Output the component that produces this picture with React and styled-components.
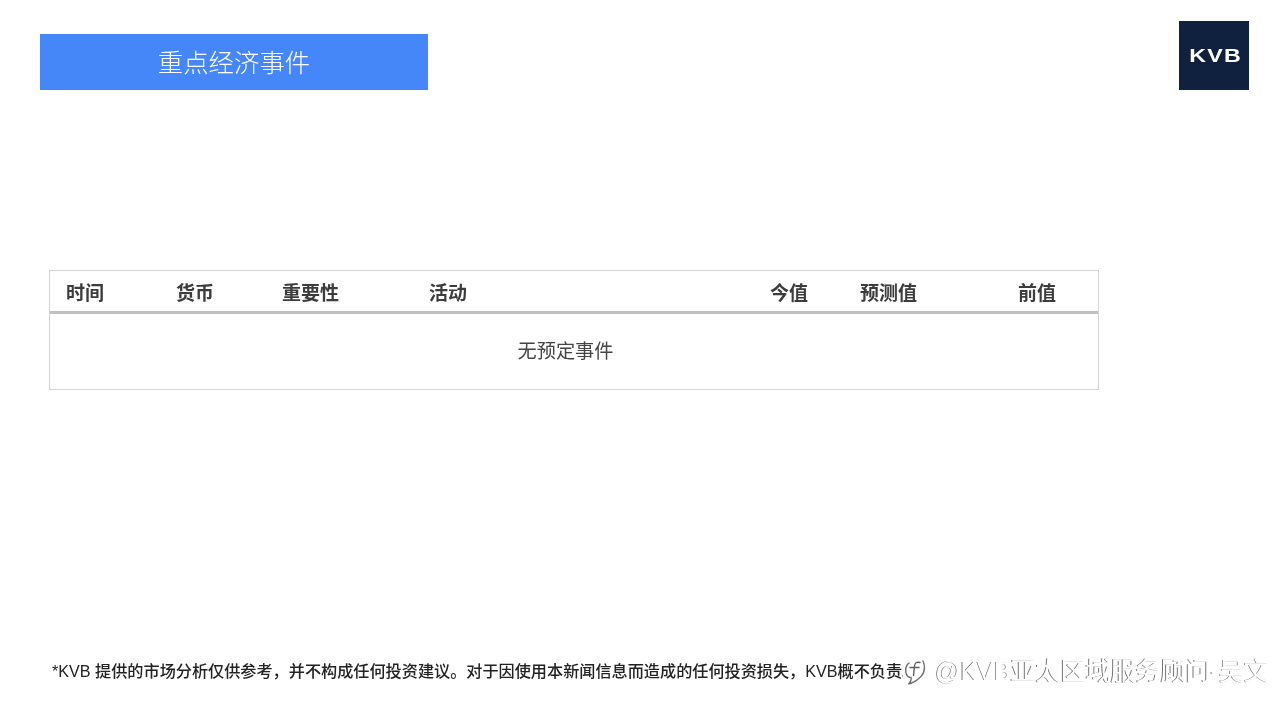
import styled, { createGlobalStyle } from "styled-components";

const FONT = `"Liberation Sans", "Noto Sans CJK SC", sans-serif`;

const columns = [
    { label: "时间", width: 110 },
    { label: "货币", width: 106 },
    { label: "重要性", width: 147 },
    { label: "活动", width: 341 },
    { label: "今值", width: 90 },
    { label: "预测值", width: 158 },
    { label: "前值", width: 80 },
];

const App = () => {
    return (
        <Page>
            <GlobalStyle />
            <Header>
                <Banner>重点经济事件</Banner>
                <Logo><LogoText>KVB</LogoText></Logo>
            </Header>
            <TableWrap>
                <TableHead>
                    {columns.map((col) => (
                        <HeadCell key={col.label} $width={col.width}>{col.label}</HeadCell>
                    ))}
                </TableHead>
                <EmptyRow>无预定事件</EmptyRow>
            </TableWrap>
            <Disclaimer>*KVB 提供的市场分析仅供参考，并不构成任何投资建议。对于因使用本新闻信息而造成的任何投资损失，KVB概不负责。</Disclaimer>
            <Watermark>
                <svg width="24" height="30" viewBox="0 0 24 30" fill="none">
                    <path d="M6 7C3 9.5 2 14 3.5 18.5C4.2 20.5 5.5 21.5 8 21.5C8.5 24 8 26 5.5 28C10 27 14 24.5 18 20.5C21.5 16.5 22.5 11 20 5" stroke="#6f6f6f" strokeWidth="1.4" strokeLinecap="round" />
                    <path d="M17 6.5C13.5 5.5 11.8 7 11.5 10L10.5 19.5M7 11.5H16" stroke="#5f5f5f" strokeWidth="1.4" strokeLinecap="round" />
                </svg>
                <WatermarkText>@KVB亚太区域服务顾问-吴文</WatermarkText>
            </Watermark>
        </Page>
    );
};

const GlobalStyle = createGlobalStyle`
    html, body {
        margin: 0;
        padding: 0;
        background: #ffffff;
    }
    * {
        box-sizing: border-box;
    }
`;
const Page = styled.div`
    position: relative;
    width: 1280px;
    height: 714px;
    overflow: hidden;
    padding: 21px 31px 0 40px;
    font-family: ${FONT};
    background: #ffffff;
    filter: blur(0.55px);
`;
const Header = styled.div`
    display: flex;
    justify-content: space-between;
    align-items: flex-start;
`;
const Banner = styled.div`
    display: flex;
    align-items: center;
    justify-content: center;
    width: 388px;
    height: 56px;
    margin-top: 13px;
    padding-bottom: 2px;
    background-color: #4587f8;
    color: #ffffff;
    font-size: 25.4px;
    font-weight: 300;
`;
const Logo = styled.div`
    display: flex;
    align-items: center;
    justify-content: center;
    width: 70px;
    height: 69px;
    padding-left: 4px;
    background-color: #10213f;
`;
const LogoText = styled.span`
    color: #ffffff;
    font-size: 19px;
    font-weight: 700;
    letter-spacing: 1px;
    transform: scaleX(1.22);
`;
const TableWrap = styled.div`
    width: 1050px;
    height: 120px;
    margin: 180px 0 0 9px;
    border: 1px solid #d4d4d4;
`;
const TableHead = styled.div`
    display: flex;
    align-items: center;
    height: 43px;
    padding-left: 16px;
    border-bottom: 3px solid #c0c0c0;
`;
const HeadCell = styled.div`
    flex: 0 0 ${({ $width }) => $width}px;
    color: #3c3c3c;
    font-size: 19px;
    font-weight: 700;
`;
const EmptyRow = styled.div`
    display: flex;
    align-items: center;
    justify-content: center;
    height: 75px;
    padding: 0 17px 3px 0;
    color: #444444;
    font-size: 19.2px;
`;
const Disclaimer = styled.div`
    margin: 270px 0 0 12px;
    color: #222222;
    font-size: 16.15px;
    font-weight: 500;
    line-height: 22px;
    white-space: nowrap;
`;
const Watermark = styled.div`
    position: absolute;
    left: 903px;
    top: 656px;
    display: flex;
    align-items: center;
    gap: 8px;
    background: #ffffff;
`;
const WatermarkText = styled.span`
    color: #ffffff;
    font-size: 25px;
    line-height: 30px;
    white-space: nowrap;
    text-shadow: -0.8px 0.4px 0 #707070;
`;

export default App;
